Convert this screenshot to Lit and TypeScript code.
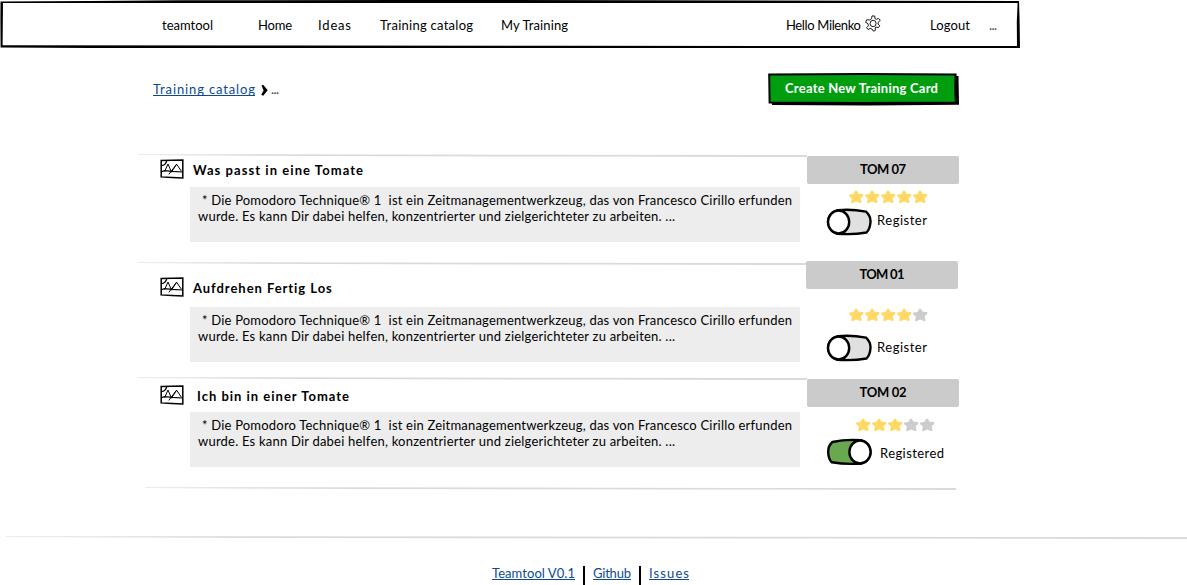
import { LitElement, html, css, svg } from "lit";
import { customElement, property } from "lit/decorators.js";
import { classMap } from "lit/directives/class-map.js";

interface Training {
  title: string;
  titleWidth: number;
  code: string;
  codeWidth: number;
  stars: number;
  registered: boolean;
  variant: string;
}

const trainings: Training[] = [
  { title: "Was passt in eine Tomate", titleWidth: 170, code: "TOM 07", codeWidth: 46, stars: 5, registered: false, variant: "first" },
  { title: "Aufdrehen Fertig Los", titleWidth: 139, code: "TOM 01", codeWidth: 45, stars: 4, registered: false, variant: "second" },
  { title: "Ich bin in einer Tomate", titleWidth: 152, code: "TOM 02", codeWidth: 47, stars: 3, registered: true, variant: "third" },
];

/** A single line of text, tracked so that it fills the given width. */
@customElement("fit-text")
export class FitText extends LitElement {
  @property() text = "";
  @property({ type: Number }) width = 0;

  static styles = css`
    :host { display: block; flex: none; white-space: pre; }
    .line { display: inline-block; }
  `;

  updated() {
    const line = this.renderRoot.querySelector(".line") as HTMLElement;
    line.style.letterSpacing = "0px";
    const natural = line.getBoundingClientRect().width;
    const spacing = (this.width - natural) / Math.max(1, this.text.length - 1);
    line.style.letterSpacing = `${spacing}px`;
    this.style.width = `${this.width}px`;
  }

  render() {
    return html`<span class="line">${this.text}</span>`;
  }
}

/** Hand-drawn grey divider. */
@customElement("sketch-rule")
export class SketchRule extends LitElement {
  static styles = css`
    :host { display: block; height: 4px; }
    svg { display: block; width: 100%; height: 4px; }
  `;
  render() {
    return html`<svg viewBox="0 0 700 4" preserveAspectRatio="none">
      <path d="M0 0.5L120 0.2L400 0.7L700 1.1V3L480 2.5L180 2.1L90 1.6L0 1.1Z" fill="#dadada" />
    </svg>`;
  }
}

@customElement("star-rating")
export class StarRating extends LitElement {
  @property({ type: Number }) value = 0;
  static styles = css`
    :host { display: flex; height: 14px; }
    svg { display: block; flex: none; width: 16px; height: 14px; overflow: visible; }
    .on { fill: #ffd966; }
    .off { fill: #cccccc; }
  `;
  render() {
    return [1, 2, 3, 4, 5].map(
      (n) => html`<svg viewBox="0 0 16 14" class=${classMap({ on: n <= this.value, off: n > this.value })}>
        <path d="M6.1 0.9Q7 0 7.9 0.9L9.7 3.8L13.7 4.1Q15 4.9 14.1 5.9L11.6 8.3L12.5 12.2Q12.3 13.5 11.1 13.1L7.2 11.6L3.4 13.2Q2 13.5 2.2 12.2L2.8 8.4L0 5.9Q-0.6 4.8 0.7 4.5L4.4 3.9Z" />
      </svg>`
    );
  }
}

@customElement("sketch-toggle")
export class SketchToggle extends LitElement {
  @property({ type: Boolean }) on = false;
  static styles = css`
    :host { display: block; flex: none; width: 46px; height: 28px; }
    svg { display: block; }
  `;
  render() {
    const off = svg`
      <path d="M12 2.2Q25 0.8 40 3.6Q44.8 8 44.5 14Q44 21 40.5 24.5Q27 27 11 25.7Q2 21 2 13.5Q3 5 12 2.2Z" fill="#e0e0e0" />
      <ellipse cx="12.6" cy="14" rx="10.6" ry="11.5" fill="#fff" />`;
    const on = svg`
      <path d="M35 2.2Q20 1 6.4 4Q2 8 2.2 14Q2.4 21 5.8 24.3Q19 26.6 35 25.6Q44.8 21 44.5 13.5Q44 5 35 2.2Z" fill="#6aa84f" />
      <ellipse cx="34" cy="14" rx="10.6" ry="11.5" fill="#fff" />`;
    return html`<svg width="46" height="28" viewBox="0 0 46 28" stroke="#000" stroke-width="2.4">${this.on ? on : off}</svg>`;
  }
}

@customElement("training-row")
export class TrainingRow extends LitElement {
  @property({ attribute: false }) item!: Training;

  static styles = css`
    :host { display: block; }
    .row { display: flex; }
    .first { height: 108px; }
    .second { height: 115px; }
    .third { height: 110px; }
    .main { width: 669px; flex: none; }
    .head { display: flex; align-items: flex-start; padding: 1px 0 0 22px; height: 28px; }
    .second .head { padding-top: 11px; height: 30px; }
    .third .head { padding-top: 4px; height: 27px; }
    .picture { flex: none; display: block; }
    .title { font-weight: 700; line-height: 20px; margin: 1px 0 0 9px; }
    .third .title { margin-left: 13px; }
    .body {
      box-sizing: border-box; width: 610px; height: 55px; margin-left: 52px;
      padding: 5px 0 0 8px; background: #ededed; line-height: 16px;
    }
    .lead { padding-left: 4px; }
    .side { width: 152px; flex: none; padding-top: 2px; }
    .second .side { margin: -1px 0 0 -1px; padding: 0; }
    .code {
      height: 28px; background: #cbcbcb; border-radius: 2px; display: flex;
      justify-content: center; font-weight: 700; line-height: 26px;
    }
    .stars { margin: 6px 0 0 42px; }
    .second .stars { margin: 19px 0 0 43px; }
    .third .stars { margin: 11px 0 0 49px; }
    .register { display: flex; align-items: center; gap: 5px; margin: 4px 0 0 19px; line-height: 16px; }
    .second .register { margin: 12px 0 0 20px; }
    .third .register { margin: 6px 0 0 19px; gap: 8px; }
    .label { margin-top: -4px; }
    .second .label { margin-top: -2px; }
    .third .label { margin-top: 2px; }
  `;

  render() {
    const t = this.item;
    return html`<div class="row ${t.variant}">
      <div class="main">
        <sketch-rule></sketch-rule>
        <div class="head">
          <svg class="picture" width="24" height="20" viewBox="0 0 24 20" fill="none" stroke="#000" stroke-width="1">
            <path d="M1.2 1.4L22.8 1V19L12 18.4L1.2 17.9Z" stroke-width="1.5" />
            <path d="M1.3 6.6Q5.6 6.4 6.9 1.3" stroke-width="1.3" />
            <path d="M1.5 12.8L4.4 11.6L12.4 12.4L22.4 13" stroke-width="1.2" />
            <path d="M4.6 12.6L8 5L11.6 13.4M8.8 15.4L16.6 5.2L21.4 12.2M12.2 12L16.6 5.2" />
          </svg>
          <fit-text class="title" .text=${t.title} .width=${t.titleWidth}></fit-text>
        </div>
        <div class="body">
          <fit-text class="lead" .text=${"* Die Pomodoro Technique® 1  ist ein Zeitmanagementwerkzeug, das von Francesco Cirillo erfunden"} .width=${590}></fit-text>
          <fit-text .text=${"wurde. Es kann Dir dabei helfen, konzentrierter und zielgerichteter zu arbeiten. ..."} .width=${477}></fit-text>
        </div>
      </div>
      <div class="side">
        <div class="code"><fit-text .text=${t.code} .width=${t.codeWidth}></fit-text></div>
        <star-rating class="stars" .value=${t.stars}></star-rating>
        <div class="register">
          <sketch-toggle .on=${t.registered}></sketch-toggle>
          <fit-text class="label" .text=${t.registered ? "Registered" : "Register"} .width=${t.registered ? 64 : 50}></fit-text>
        </div>
      </div>
    </div>`;
  }
}

@customElement("app-root")
export class AppRoot extends LitElement {
  static styles = css`
    :host {
      display: block; width: 1187px; height: 585px; overflow: hidden; background: #fff;
      color: #000; font: 13px/18px Lato, "Open Sans", sans-serif;
    }
    .bar { display: grid; width: 1020px; height: 48px; }
    .frame, .nav { grid-area: 1 / 1; }
    .frame { display: block; }
    .nav { display: flex; align-items: center; padding: 2px 0 0 162px; }
    .home { margin-left: 45px; }
    .ideas { margin-left: 26px; }
    .catalog { margin-left: 29px; }
    .mine { margin-left: 28px; }
    .hello { margin-left: 218px; }
    .gear { flex: none; margin: -4px 0 0 4px; }
    .logout { margin-left: 49px; }
    .more { margin-left: 19px; color: #444; }
    .tools { display: flex; height: 33px; padding: 25px 0 0 153px; }
    .crumbs { display: flex; width: 615px; padding-top: 9px; }
    .link { color: #0b4a92; border-bottom: 1px solid #0b4a92; line-height: 15px; height: 13px; }
    .chevron { flex: none; margin: 3px 3px 0 6px; }
    .dots { color: #444; line-height: 14px; }
    .create {
      display: grid; width: 191px; height: 33px; padding: 0; border: 0; background: none;
      color: #fff; font: inherit; font-weight: 700; text-align: left;
    }
    .plate, .caption { grid-area: 1 / 1; }
    .plate { display: block; }
    .caption { margin: 6px 0 0 17px; line-height: 18px; }
    .list { margin: 48px 0 0 138px; width: 821px; }
    .end { width: 811px; margin-left: 7px; }
    .foot-rule { width: 1181px; margin: 45px 0 0 6px; }
    .footer { display: flex; padding: 26px 0 0 492px; }
    .sep { width: 2px; height: 19px; background: #000; margin: 0 8px; }
    .wide { margin-right: 8px; }
  `;

  render() {
    return html`
      <header class="bar">
        <svg class="frame" width="1020" height="48" viewBox="0 0 1020 48">
          <path fill-rule="evenodd" d="M0.5 1.4L90 1L180 0.3L400 0L640 0.2L880 0.7L1019 0.9L1019.6 20L1020 48L900 48.4L640 48.7L300 48.5L90 48L0.6 47.4L0.4 20ZM3 3L2.6 45.2L300 45.6L560 45.8L1017 46L1016.8 22L1017.6 3L700 3L500 3L200 3Z" />
        </svg>
        <nav class="nav">
          <fit-text .text=${"teamtool"} .width=${51}></fit-text>
          <fit-text class="home" .text=${"Home"} .width=${34}></fit-text>
          <fit-text class="ideas" .text=${"Ideas"} .width=${33}></fit-text>
          <fit-text class="catalog" .text=${"Training catalog"} .width=${93}></fit-text>
          <fit-text class="mine" .text=${"My Training"} .width=${67}></fit-text>
          <fit-text class="hello" .text=${"Hello Milenko"} .width=${75}></fit-text>
          <svg class="gear" width="16" height="17" viewBox="0 0 16 17" fill="none" stroke="#000" stroke-width="0.9" stroke-linejoin="round">
            <path d="M6.6 3.6L7 0.9L9.8 1.1L9.9 3.6L11.4 4.3L13.6 3.4L15.3 5.4L13.2 7.2L13 9L14.8 10.8L13.4 12.6L11 12L10.2 13L10.4 15.4L8.4 16.2L7 14L5.2 13.4L3 14.6L1.6 12.6L3.4 10.8L3 8.6L0.7 7.4L1.6 4.8L4.6 5Z" />
            <ellipse cx="8.1" cy="8.5" rx="3" ry="3.2" />
          </svg>
          <fit-text class="logout" .text=${"Logout"} .width=${40}></fit-text>
          <fit-text class="more" .text=${"..."} .width=${8}></fit-text>
        </nav>
      </header>
      <section class="tools">
        <div class="crumbs">
          <fit-text class="link" .text=${"Training catalog"} .width=${102}></fit-text>
          <svg class="chevron" width="7" height="11" viewBox="0 0 7 11"><path d="M0.5 0.3L2.4 0L6.7 5.2L2.2 10.8L0.2 9.7L2.6 5.5Z" /></svg>
          <fit-text class="dots" .text=${"..."} .width=${8}></fit-text>
        </div>
        <button class="create">
          <svg class="plate" width="191" height="33" viewBox="0 0 191 33">
            <path d="M4 4L190.5 3L191 31.8L100 32.4L4 32Z" />
            <path d="M1.2 1.6L95 1L187.6 1.4L187.2 15L187.8 29.6L90 30L1.6 29.6Z" fill="#009e0f" stroke="#000" stroke-width="2" />
          </svg>
          <fit-text class="caption" .text=${"Create New Training Card"} .width=${153}></fit-text>
        </button>
      </section>
      <main class="list">
        ${trainings.map((t) => html`<training-row .item=${t}></training-row>`)}
        <sketch-rule class="end"></sketch-rule>
      </main>
      <sketch-rule class="foot-rule"></sketch-rule>
      <footer class="footer">
        <fit-text class="link" .text=${"Teamtool V0.1"} .width=${83}></fit-text>
        <div class="sep"></div>
        <fit-text class="link" .text=${"Github"} .width=${38}></fit-text>
        <div class="sep wide"></div>
        <fit-text class="link" .text=${"Issues"} .width=${40}></fit-text>
      </footer>
    `;
  }
}
